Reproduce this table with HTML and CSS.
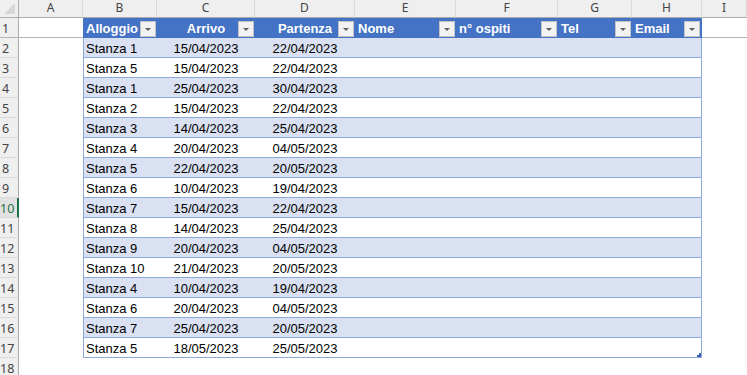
FILE: index.html
```html
<!DOCTYPE html>
<html lang="it">
<head>
<meta charset="utf-8">
<title>Prenotazioni</title>
<link rel="stylesheet" href="styles.css">
</head>
<body>
<div class="sheet">
  <div class="row colhdr">
    <div class="corner"><svg width="18" height="17" viewBox="0 0 18 17"><polygon points="15,3 15,14 4,14" fill="#d6d6d6"/></svg></div>
    <div class="ch">A</div><div class="ch">B</div><div class="ch">C</div><div class="ch">D</div><div class="ch">E</div><div class="ch">F</div><div class="ch">G</div><div class="ch">H</div><div class="ch">I</div>
  </div>

  <div class="row hdr">
    <div class="rh frz">1</div><div class="gap frz"></div>
    <div class="t first">Alloggio<span class="dd"><svg width="14" height="14" viewBox="0 0 14 14"><path d="M4 6H10L7 9Z" fill="#606060"/></svg></span></div>
    <div class="t c">Arrivo<span class="dd"><svg width="14" height="14" viewBox="0 0 14 14"><path d="M4 6H10L7 9Z" fill="#606060"/></svg></span></div>
    <div class="t c">Partenza<span class="dd"><svg width="14" height="14" viewBox="0 0 14 14"><path d="M4 6H10L7 9Z" fill="#606060"/></svg></span></div>
    <div class="t">Nome<span class="dd"><svg width="14" height="14" viewBox="0 0 14 14"><path d="M4 6H10L7 9Z" fill="#606060"/></svg></span></div>
    <div class="t">n° ospiti<span class="dd"><svg width="14" height="14" viewBox="0 0 14 14"><path d="M4 6H10L7 9Z" fill="#606060"/></svg></span></div>
    <div class="t">Tel<span class="dd"><svg width="14" height="14" viewBox="0 0 14 14"><path d="M4 6H10L7 9Z" fill="#606060"/></svg></span></div>
    <div class="t last">Email<span class="dd"><svg width="14" height="14" viewBox="0 0 14 14"><path d="M4 6H10L7 9Z" fill="#606060"/></svg></span></div>
    <div class="gap frz"></div>
  </div>

  <div class="row band"><div class="rh">2</div><div class="gap"></div><div class="t first">Stanza 1</div><div class="t c">15/04/2023</div><div class="t c">22/04/2023</div><div class="t"></div><div class="t"></div><div class="t"></div><div class="t last"></div><div class="gap"></div></div>
  <div class="row"><div class="rh">3</div><div class="gap"></div><div class="t first">Stanza 5</div><div class="t c">15/04/2023</div><div class="t c">22/04/2023</div><div class="t"></div><div class="t"></div><div class="t"></div><div class="t last"></div><div class="gap"></div></div>
  <div class="row band"><div class="rh">4</div><div class="gap"></div><div class="t first">Stanza 1</div><div class="t c">25/04/2023</div><div class="t c">30/04/2023</div><div class="t"></div><div class="t"></div><div class="t"></div><div class="t last"></div><div class="gap"></div></div>
  <div class="row"><div class="rh">5</div><div class="gap"></div><div class="t first">Stanza 2</div><div class="t c">15/04/2023</div><div class="t c">22/04/2023</div><div class="t"></div><div class="t"></div><div class="t"></div><div class="t last"></div><div class="gap"></div></div>
  <div class="row band"><div class="rh">6</div><div class="gap"></div><div class="t first">Stanza 3</div><div class="t c">14/04/2023</div><div class="t c">25/04/2023</div><div class="t"></div><div class="t"></div><div class="t"></div><div class="t last"></div><div class="gap"></div></div>
  <div class="row"><div class="rh">7</div><div class="gap"></div><div class="t first">Stanza 4</div><div class="t c">20/04/2023</div><div class="t c">04/05/2023</div><div class="t"></div><div class="t"></div><div class="t"></div><div class="t last"></div><div class="gap"></div></div>
  <div class="row band"><div class="rh">8</div><div class="gap"></div><div class="t first">Stanza 5</div><div class="t c">22/04/2023</div><div class="t c">20/05/2023</div><div class="t"></div><div class="t"></div><div class="t"></div><div class="t last"></div><div class="gap"></div></div>
  <div class="row"><div class="rh">9</div><div class="gap"></div><div class="t first">Stanza 6</div><div class="t c">10/04/2023</div><div class="t c">19/04/2023</div><div class="t"></div><div class="t"></div><div class="t"></div><div class="t last"></div><div class="gap"></div></div>
  <div class="row band"><div class="rh sel">10</div><div class="gap"></div><div class="t first">Stanza 7</div><div class="t c">15/04/2023</div><div class="t c">22/04/2023</div><div class="t"></div><div class="t"></div><div class="t"></div><div class="t last"></div><div class="gap"></div></div>
  <div class="row"><div class="rh">11</div><div class="gap"></div><div class="t first">Stanza 8</div><div class="t c">14/04/2023</div><div class="t c">25/04/2023</div><div class="t"></div><div class="t"></div><div class="t"></div><div class="t last"></div><div class="gap"></div></div>
  <div class="row band"><div class="rh">12</div><div class="gap"></div><div class="t first">Stanza 9</div><div class="t c">20/04/2023</div><div class="t c">04/05/2023</div><div class="t"></div><div class="t"></div><div class="t"></div><div class="t last"></div><div class="gap"></div></div>
  <div class="row"><div class="rh">13</div><div class="gap"></div><div class="t first">Stanza 10</div><div class="t c">21/04/2023</div><div class="t c">20/05/2023</div><div class="t"></div><div class="t"></div><div class="t"></div><div class="t last"></div><div class="gap"></div></div>
  <div class="row band"><div class="rh">14</div><div class="gap"></div><div class="t first">Stanza 4</div><div class="t c">10/04/2023</div><div class="t c">19/04/2023</div><div class="t"></div><div class="t"></div><div class="t"></div><div class="t last"></div><div class="gap"></div></div>
  <div class="row"><div class="rh">15</div><div class="gap"></div><div class="t first">Stanza 6</div><div class="t c">20/04/2023</div><div class="t c">04/05/2023</div><div class="t"></div><div class="t"></div><div class="t"></div><div class="t last"></div><div class="gap"></div></div>
  <div class="row band"><div class="rh">16</div><div class="gap"></div><div class="t first">Stanza 7</div><div class="t c">25/04/2023</div><div class="t c">20/05/2023</div><div class="t"></div><div class="t"></div><div class="t"></div><div class="t last"></div><div class="gap"></div></div>
  <div class="row"><div class="rh">17</div><div class="gap"></div><div class="t first">Stanza 5</div><div class="t c">18/05/2023</div><div class="t c">25/05/2023</div><div class="t"></div><div class="t"></div><div class="t"></div><div class="t last end"><svg class="grip" width="4" height="4" viewBox="0 0 4 4"><path d="M2 0H4V4H0V2H2Z" fill="#3d5fae"/></svg></div><div class="gap"></div></div>
  <div class="row"><div class="rh">18</div><div class="gap"></div><div class="gap"></div><div class="gap"></div><div class="gap"></div><div class="gap"></div><div class="gap"></div><div class="gap"></div><div class="gap"></div><div class="gap"></div></div>
</div>
</body>
</html>
```

FILE: styles.css
```css
html, body {
  margin: 0;
  padding: 0;
  background: #ffffff;
  overflow: hidden;
}

body {
  font-family: "Liberation Sans", Arial, sans-serif;
}

.sheet {
  width: 747px;
}

.row {
  display: grid;
  grid-template-columns: 19px 64px 74px 98px 100px 101px 102px 74px 70px 1fr;
  height: 20px;
}

.row.colhdr {
  height: 18px;
}

.corner {
  background: #efefef;
  border-right: 1px solid #ababab;
  border-bottom: 1px solid #ababab;
  box-sizing: border-box;
  overflow: hidden;
}

.corner svg {
  display: block;
}

.ch {
  background: #efefef;
  border-right: 1px solid #d9d9d9;
  border-bottom: 1px solid #ababab;
  box-sizing: border-box;
  font-family: "Noto Sans", sans-serif;
  font-size: 12px;
  line-height: 15px;
  color: #444444;
  text-align: center;
}

.rh {
  background: #efefef;
  border-right: 1px solid #ababab;
  border-bottom: 1px solid #d9d9d9;
  box-sizing: border-box;
  font-family: "Noto Sans", sans-serif;
  font-size: 12.5px;
  line-height: 17px;
  padding: 2px 7px 0 0;
  color: #444444;
  text-align: center;
  white-space: nowrap;
}

.rh.sel {
  background: #e1e1e1;
  color: #217346;
  border-right: 2px solid #217346;
  padding-right: 8px;
}

.gap {
  background: #ffffff;
}

.frz {
  border-bottom: 1px solid #b4b4b4;
  box-sizing: border-box;
}

.t {
  position: relative;
  box-sizing: border-box;
  border-bottom: 1px solid #8ea9db;
  padding: 3px 3px 0 3px;
  font-size: 13px;
  line-height: 16px;
  color: #000000;
  white-space: nowrap;
  overflow: hidden;
  background: #ffffff;
}

.band .t {
  background: #d9e1f2;
}

.t.first {
  border-left: 1px solid #8ea9db;
  padding-left: 2px;
}

.t.last {
  border-right: 1px solid #8ea9db;
}

.t.c {
  text-align: center;
  padding-left: 0;
  padding-right: 0;
}

.hdr .t {
  background: #4472c4;
  color: #ffffff;
  font-weight: bold;
  border-bottom-color: #4472c4;
}

.hdr .t.first {
  border-left-color: #4472c4;
}

.hdr .t.last {
  border-right-color: #4472c4;
}

.dd {
  position: absolute;
  right: 1px;
  top: 3px;
  width: 16px;
  height: 16px;
  box-sizing: border-box;
  background: #f2f2f2;
  border: 1px solid #c4c4c4;
}

.dd svg {
  display: block;
}

.grip {
  position: absolute;
  right: 0;
  bottom: 0;
  display: block;
}
```
